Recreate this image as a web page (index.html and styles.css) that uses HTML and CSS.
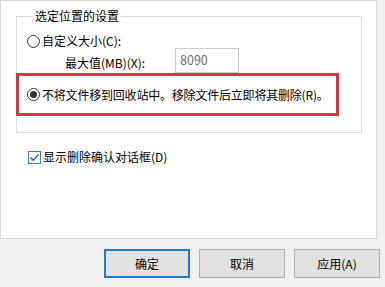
FILE: index.html
```html
<!DOCTYPE html>
<html lang="zh-CN">
<head>
<meta charset="utf-8">
<link rel="stylesheet" href="styles.css">
</head>
<body>
<div class="panel">
  <fieldset class="group">
    <legend class="legend">选定位置的设置</legend>
    <div class="row row1">
      <span class="radio"></span>
      <span class="label">自定义大小(C):</span>
    </div>
    <div class="row row2">
      <span class="label maxlabel">最大值(MB)(X):</span>
      <span class="input">8090</span>
    </div>
    <div class="row row3">
      <span class="radio checked"></span>
      <span class="label tight">不将文件移到回收站中。移除文件后立即将其删除(R)。</span>
    </div>
  </fieldset>
  <div class="row row4">
    <svg class="check" width="13" height="13" viewBox="0 0 13 13">
      <rect x="0.5" y="0.5" width="12" height="12" fill="#fff" stroke="#3a7dc0"/>
      <path d="M2.5 6.5 L5.2 9.2 L10.6 3.4" fill="none" stroke="#1f5a9c" stroke-width="1.3"/>
    </svg>
    <span class="label">显示删除确认对话框(D)</span>
  </div>
</div>
<div class="buttons">
  <div class="btn default">确定</div>
  <div class="btn">取消</div>
  <div class="btn">应用(A)</div>
</div>
<div class="highlight"></div>
</body>
</html>
```

FILE: styles.css
```css
html, body {
  margin: 0;
  padding: 0;
}
body {
  width: 385px;
  height: 287px;
  background: #f0f0f0;
  font-family: "Noto Sans CJK SC", "Microsoft YaHei", sans-serif;
  font-size: 12px;
  line-height: 16px;
  color: #000;
  position: relative;
  overflow: hidden;
}
.panel {
  box-sizing: border-box;
  width: 377px;
  height: 239px;
  background: #fff;
  border: 1px solid #d9d9d9;
  padding: 7px 0 0 15px;
}
.group {
  box-sizing: border-box;
  width: 346px;
  margin: 0;
  padding: 0 0 17px 10px;
  border: 1px solid #dcdcdc;
  min-inline-size: 0;
}
.legend {
  padding: 0 2px;
  margin-left: 6px;
  line-height: 16px;
}
.row {
  display: flex;
  align-items: center;
}
.row1 {
  margin-top: 9px;
  height: 16px;
}
.row2 {
  margin-top: -1px;
  height: 24px;
  padding-left: 38px;
}
.maxlabel {
  margin-top: 5px;
  width: 110px;
}
.input {
  box-sizing: border-box;
  width: 64px;
  height: 25px;
  border: 1px solid #cccccc;
  background: #fff;
  color: #6d6d6d;
  padding-left: 4px;
  display: flex;
  align-items: center;
  font-size: 12.5px;
}
.row3 {
  height: 43px;
  padding-top: 2px;
  box-sizing: border-box;
}
.radio {
  box-sizing: border-box;
  width: 13px;
  height: 13px;
  border: 1px solid #333;
  border-radius: 50%;
  background: #fff;
  margin-right: 2px;
  display: flex;
  align-items: center;
  justify-content: center;
  flex: none;
}
.radio.checked::after {
  content: "";
  width: 7px;
  height: 7px;
  border-radius: 50%;
  background: #333;
}
.label {
  white-space: nowrap;
}
.tight {
  letter-spacing: -0.2px;
}
.row4 {
  margin-top: 16px;
  height: 16px;
  padding-left: 12px;
}
.check {
  display: block;
  margin-right: 2px;
  flex: none;
}
.buttons {
  display: flex;
  gap: 9px;
  margin-top: 10px;
  padding-left: 104px;
}
.btn {
  box-sizing: border-box;
  width: 86px;
  height: 29px;
  background: #e1e1e1;
  border: 1px solid #adadad;
  display: flex;
  align-items: center;
  justify-content: center;
}
.btn.default {
  border: 2px solid #1f78d1;
}
.highlight {
  position: absolute;
  left: 16px;
  top: 73px;
  width: 323px;
  height: 43px;
  box-sizing: border-box;
  border: 3px solid #d9363e;
}
```
